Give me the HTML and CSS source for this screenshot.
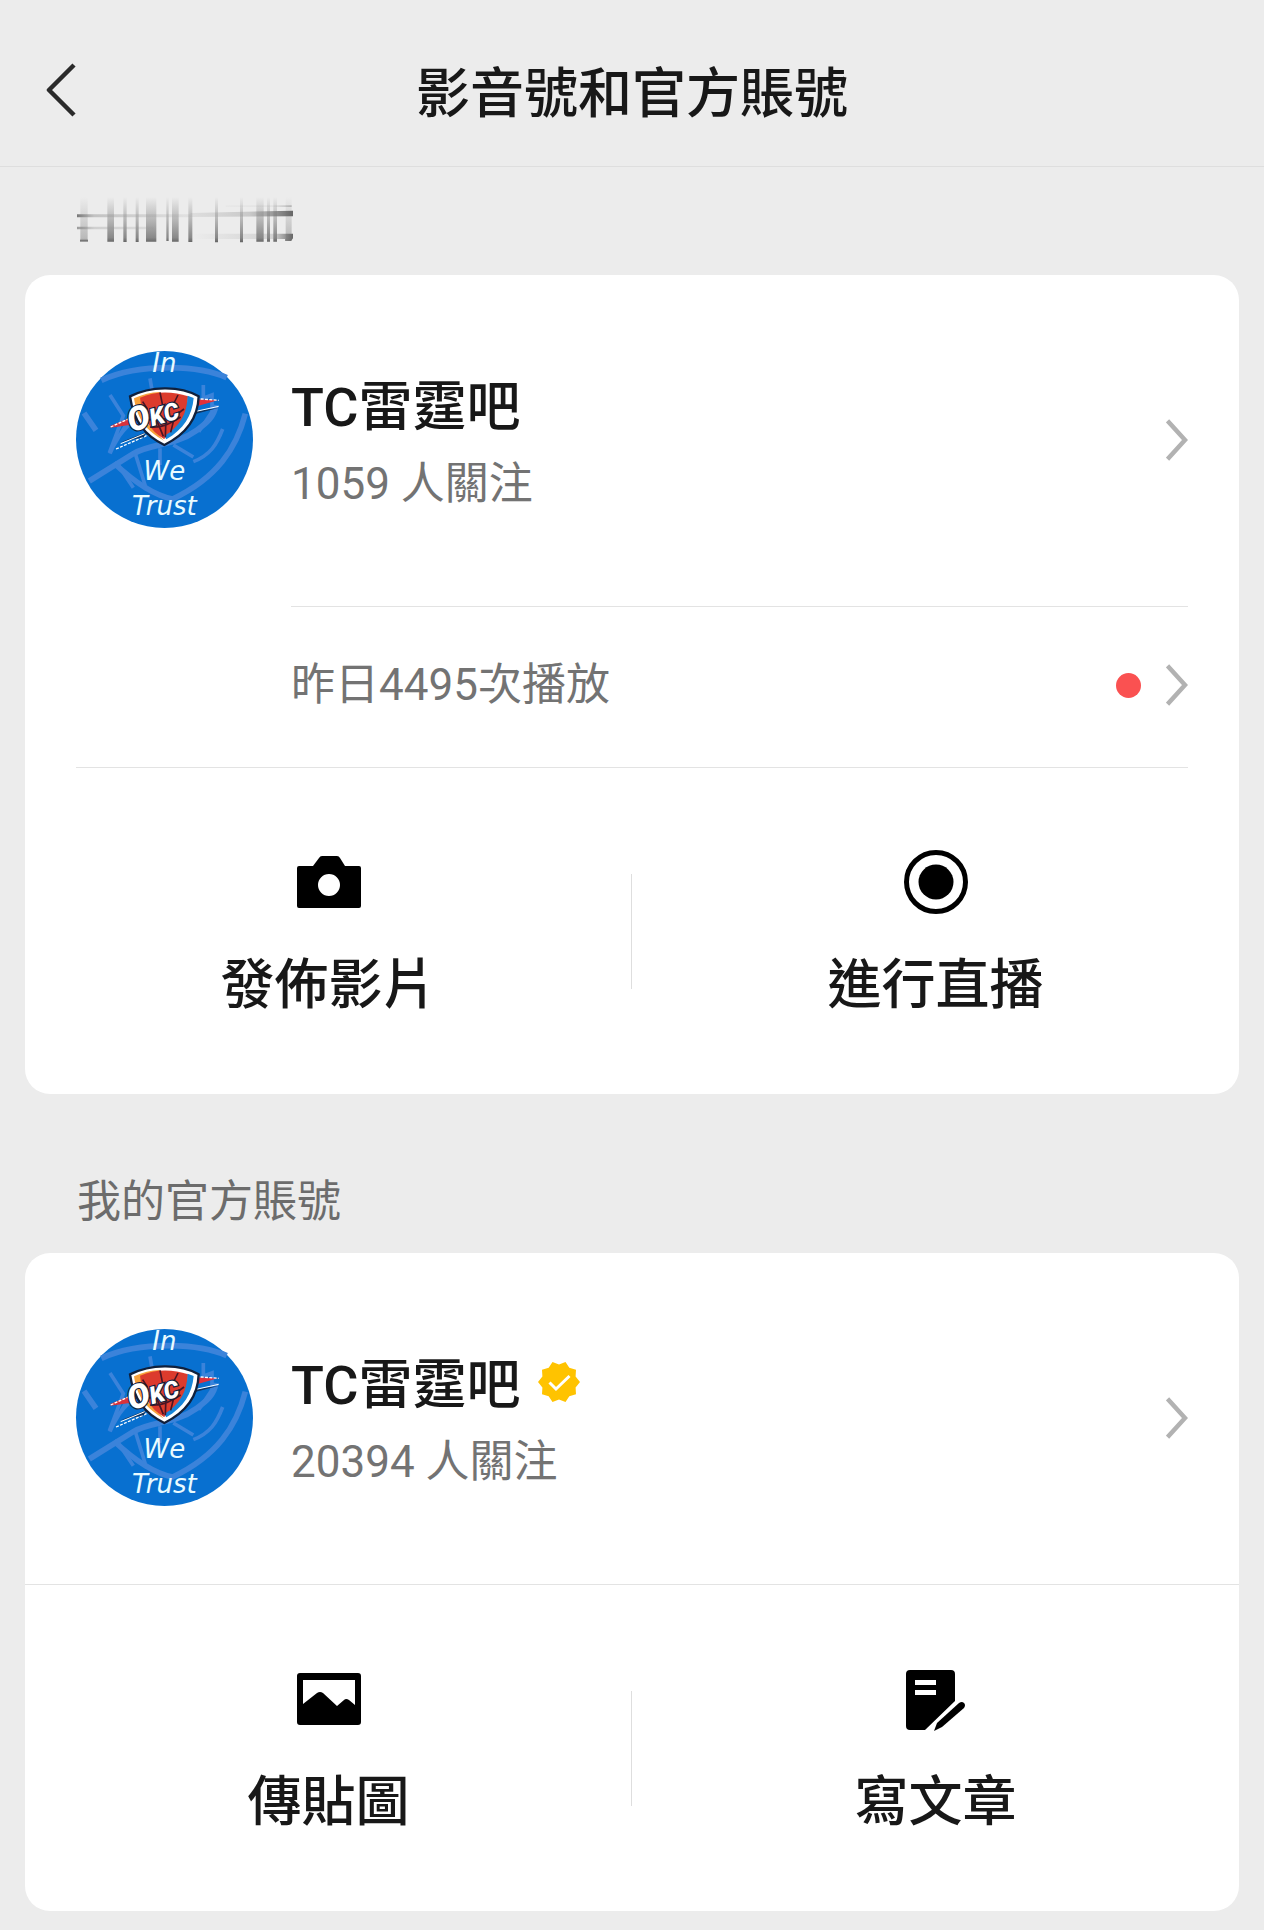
FILE: index.html
```
<!DOCTYPE html>
<html lang="zh-Hant">
<head>
  <meta charset="UTF-8">
  <meta name="viewport" content="width=device-width, initial-scale=1.0">
  <title>影音號和官方賬號</title>
  <link rel="stylesheet" href="styles.css">
</head>
<body>
  <!-- shared icons -->
  <svg class="sprite" aria-hidden="true">
    <symbol id="chevron" viewBox="0 0 22 42">
      <path d="M1.5 1.8 19 21 1.5 40.2" fill="none" stroke="#b2b2b2" stroke-width="4.5"/>
    </symbol>
  </svg>

  <header class="header">
    <button type="button" class="back-btn" aria-label="返回">
      <svg width="30" height="56" viewBox="0 0 30 56"><path d="M28 3 3 28l25 25" fill="none" stroke="#2a2a2a" stroke-width="4.5" stroke-linejoin="round"/></svg>
    </button>
    <h1>影音號和官方賬號</h1>
  </header>

  <main>
    <div class="smudge">
      <svg width="216" height="47" viewBox="54 45 648 141" aria-hidden="true">
        <defs>
          <linearGradient id="fade" gradientUnits="userSpaceOnUse" x1="0" y1="48" x2="0" y2="183">
            <stop offset="0" stop-color="#777" stop-opacity="0"/>
            <stop offset=".5" stop-color="#777" stop-opacity=".45"/>
            <stop offset=".9" stop-color="#777" stop-opacity=".85"/>
            <stop offset="1" stop-color="#666"/>
          </linearGradient>
          <linearGradient id="side" gradientUnits="userSpaceOnUse" x1="54" y1="0" x2="702" y2="0">
            <stop offset="0" stop-color="#777"/>
            <stop offset=".08" stop-color="#999" stop-opacity=".5"/>
            <stop offset=".5" stop-color="#999" stop-opacity=".15"/>
            <stop offset=".8" stop-color="#888" stop-opacity=".35"/>
            <stop offset="1" stop-color="#666"/>
          </linearGradient>
          <linearGradient id="low" gradientUnits="userSpaceOnUse" x1="400" y1="0" x2="702" y2="0">
            <stop offset="0" stop-color="#888" stop-opacity="0"/>
            <stop offset=".8" stop-color="#888" stop-opacity=".25"/>
            <stop offset="1" stop-color="#666"/>
          </linearGradient>
        </defs>
        <path fill="url(#fade)" d="M145 48h20v134h-20zM193 48h10v135h-10zM230 48h9v135h-9zM261 48h31v134h-31zM322 48h7v132h-7zM339 48h20v134h-20zM388 48h12v135h-12zM468 48h9v136h-9zM543 48h9v136h-9zM592 48h22v134h-22zM624 48h9v134h-9zM643 48h11v134h-11z"/>
        <path fill="url(#fade)" opacity=".5" d="M64 48h22v132h-22zM680 48h18v132h-18z"/>
        <path fill="#777" d="M63 176h24v6h-24z"/>
        <path fill="url(#side)" d="M54 100h340v9h-340zM394 96l308-7v17l-308 2z"/>
        <path fill="url(#side)" opacity=".7" d="M54 137h230v8h-230z"/>
        <path fill="url(#low)" d="M400 158h302v14l-6 8h-18v-6h-278z"/>
        <path fill="url(#low)" opacity=".4" d="M500 73h198v5h-198z"/>
      </svg>
    </div>

    <section class="card">
      <a href="#" class="account">
        <svg class="avatar" viewBox="48 48 531 531" aria-hidden="true">
          <g id="avatar">
            <circle cx="313.5" cy="313.5" r="265.5" fill="#0870d0"/>
            <!-- faded crest in the background -->
            <g fill="none" stroke="#3b83da" stroke-width="17">
              <path d="M124 136C184 108 250 98 330 98c72 1 124 9 170 30"/>
              <path d="M556 236C530 340 470 430 338 492c-52-10-106-42-176-108"/>
              <path d="M72 234l36 52M88 438l132-82c60-34 120-20 190-70 30-22 52-40 58-76"/>
              <path d="M150 180l40 62-42 112 52-88 60-30M150 356c20-50 50-90 96-112M176 392l44 66M226 356l34 110M270 130l10 60M430 150v40l26-10v50l-40 60M400 380c50-20 70-50 88-98M340 330l60 36M300 340v50" stroke-width="11"/>
            </g>
            <!-- streaks -->
            <path d="M152 272l84-34-12 30-72 10z" fill="#d8323c"/>
            <path d="M398 192l76 4-64 18z" fill="#e0303a"/>
            <path d="M152 276l84-38M396 190l80 6M168 342l100-44" fill="none" stroke="#fff" stroke-width="4" stroke-dasharray="9 4"/>
            <path d="M182 322l76-30-6 14zM402 238l76-20-66 10z" fill="#10345f"/>
            <path d="M182 326l72-30M404 230l72-16" fill="none" stroke="#fff" stroke-width="3"/>
            <!-- shield -->
            <path d="M210 184c60-30 148-34 206 0-2 62-34 112-103 146-58-28-92-70-103-146z" fill="#fff" stroke="#10203c" stroke-width="7"/>
            <path d="M222 190c26-12 50-18 78-19l-40 92 52 54c-50-28-80-62-90-127z" fill="#f8a23a"/>
            <path d="M240 188c44-20 98-20 144-4 0 54-22 96-72 128-42-24-66-66-72-124z" fill="#dc3b2d"/>
            <path d="M383 182l18 7c-4 52-30 94-82 124l-6-10c48-30 68-68 70-121z" fill="#1684d8"/>
            <path d="M248 200l14 22M300 172l8 40M354 180l-18 36M288 250l22 54M318 250l-2 56M346 236l-14 56M270 276c30 4 60-8 92-30M258 252c36 10 80-2 114-30" fill="none" stroke="#4b1524" stroke-width="5"/>
            <text class="crest-text" x="212" y="292" transform="rotate(-16 212 292)"><tspan font-size="100">O</tspan><tspan font-size="72">KC</tspan></text>
            <g class="avatar-text">
              <text x="313" y="112">In</text>
              <text x="313" y="434">We</text>
              <text x="313" y="541">Trust</text>
            </g>
          </g>
        </svg>
        <div class="info">
          <p class="name">TC雷霆吧</p>
          <p class="sub">1059 人關注</p>
        </div>
        <svg class="chevron" aria-hidden="true"><use href="#chevron"/></svg>
      </a>
      <a href="#" class="stats">
        <span class="sub">昨日4495次播放</span>
        <span class="dot"></span>
        <svg class="chevron" aria-hidden="true"><use href="#chevron"/></svg>
      </a>
      <div class="actions">
        <button type="button" class="action">
          <svg class="icon" viewBox="0 0 78 78">
            <path fill-rule="evenodd" d="M9 23h14l6-8q1-2 3-2h15q2 0 3 2l5 8h14q2 0 2 2v38q0 2-2 2H9q-2 0-2-2V25q0-2 2-2zM39 31a11 11 0 1 0 0 22 11 11 0 0 0 0-22z"/>
          </svg>
          <span>發佈影片</span>
        </button>
        <button type="button" class="action">
          <svg class="icon" viewBox="0 0 78 78">
            <circle cx="39" cy="39" r="29.5" fill="none" stroke="#000" stroke-width="5"/>
            <circle cx="39" cy="39" r="17.5"/>
          </svg>
          <span>進行直播</span>
        </button>
      </div>
    </section>

    <h2 class="section-title">我的官方賬號</h2>

    <section class="card">
      <a href="#" class="account">
        <svg class="avatar" viewBox="48 48 531 531" aria-hidden="true"><use href="#avatar"/></svg>
        <div class="info">
          <p class="name">TC雷霆吧
            <svg class="badge" viewBox="0 0 42 42" aria-hidden="true">
              <path d="M21 3.500 27.500 1l3.800 5.800L38 8.700l-.4 6.900L42 21l-4.400 5.400.4 6.900-6.700 1.900-3.800 5.800-6.500-2.500-6.500 2.500-3.800-5.800L4 33.300l.4-6.900L0 21l4.400-5.400L4 8.700l6.700-1.900L14.500 1z" fill="#ffc300"/>
              <path d="M11.500 21.500l6.500 6.500L31.500 15" fill="none" stroke="#fff" stroke-width="3"/>
            </svg>
          </p>
          <p class="sub">20394 人關注</p>
        </div>
        <svg class="chevron" aria-hidden="true"><use href="#chevron"/></svg>
      </a>
      <div class="actions actions-line">
        <button type="button" class="action">
          <svg class="icon" viewBox="0 0 78 78">
            <path fill-rule="evenodd" d="M10 13h58q3 0 3 3v46q0 3-3 3H10q-3 0-3-3V16q0-3 3-3zM13 20v24l14-11q3-2 6 0l14 13 7-6q2-2 5 0l6 5V20z"/>
          </svg>
          <span>傳貼圖</span>
        </button>
        <button type="button" class="action">
          <svg class="icon" viewBox="0 0 78 78">
            <path fill-rule="evenodd" d="M13 10h41q4 0 4 4v27L28 70H13q-4 0-4-4V14q0-4 4-4zM18 20v5h21v-5zM18 30v5h21v-5z"/>
            <path d="M37 71l3-8 22-20q3-2 5 0t0 5L45 67z"/>
          </svg>
          <span>寫文章</span>
        </button>
      </div>
    </section>
  </main>
</body>
</html>
```
FILE: styles.css
```
* {
  box-sizing: border-box;
  margin: 0;
  padding: 0;
}

body {
  background-color: #ececec;
  color: #181818;
  font-family: "Noto Sans CJK TC", sans-serif;
}

a {
  color: inherit;
  text-decoration: none;
}

button {
  background: none;
  border: none;
  color: inherit;
  font-family: inherit;
  cursor: pointer;
}

svg {
  display: block;
  flex-shrink: 0;
}

.sprite {
  position: absolute;
  width: 0;
  height: 0;
}

.header {
  display: grid;
  grid-template-columns: 80px 1fr 80px;
  align-items: center;
  padding: 50px 0 36px;
  border-bottom: 1px solid #dedede;
}

.back-btn {
  padding-left: 46px;
}

h1 {
  font-size: 54px;
  font-weight: 500;
  line-height: 80px;
  text-align: center;
}

main {
  padding: 0 25px 19px;
}

.smudge {
  padding: 29px 52px 32px;
}

.card {
  background-color: #fff;
  border-radius: 25px;
}

.account {
  display: flex;
  align-items: center;
  padding: 76px 51px 78px;
}

.avatar {
  width: 177px;
  height: 177px;
  margin-right: 38px;
  overflow: visible;
}

.avatar-text {
  font: italic 400 78px "DejaVu Sans", sans-serif;
  fill: #e9fbff;
  text-anchor: middle;
}

.crest-text {
  font-family: Roboto, sans-serif;
  font-style: italic;
  font-weight: 900;
  fill: #fff;
  stroke: #10203c;
  stroke-width: 7px;
  paint-order: stroke;
}

.info {
  flex: 1;
  padding-top: 8px;
}

.name {
  display: flex;
  align-items: center;
  gap: 18px;
  font-family: Roboto, "Noto Sans CJK TC", sans-serif;
  font-size: 54px;
  font-weight: 500;
  line-height: 80px;
}

.badge {
  width: 42px;
  height: 42px;
  margin-bottom: 8px;
}

.sub {
  flex: 1;
  color: #737373;
  font-family: Roboto, "Noto Sans CJK TC", sans-serif;
  font-size: 44px;
  line-height: 72px;
}

.chevron {
  width: 22px;
  height: 42px;
}

.stats {
  display: flex;
  align-items: center;
  gap: 25px;
  height: 161px;
  margin: 0 51px 0 266px;
  padding-bottom: 4px;
  border-top: 1px solid #e3e3e3;
}

.dot {
  width: 25px;
  height: 25px;
  border-radius: 50%;
  background-color: #fa5151;
}

.actions {
  position: relative;
  display: flex;
}

/* line above the buttons, inset to the card padding */
.actions::before {
  content: "";
  position: absolute;
  top: 0;
  left: 51px;
  right: 51px;
  border-top: 1px solid #e3e3e3;
}

.actions-line::before {
  left: 0;
  right: 0;
}

.actions::after {
  content: "";
  position: absolute;
  top: 107px;
  bottom: 105px;
  right: 50%;
  border-left: 1px solid #dedede;
}

.action {
  flex: 1;
  display: flex;
  flex-direction: column;
  align-items: center;
  gap: 20px;
  padding: 76px 0 73px;
  font-size: 54px;
  font-weight: 500;
  line-height: 80px;
}

.icon {
  width: 78px;
  height: 78px;
}

.section-title {
  padding: 68px 52px 19px;
  color: #6c6c6c;
  font-size: 44px;
  font-weight: 400;
  line-height: 72px;
}

@media (max-width: 700px) {
  .header {
    padding: 16px 0;
  }

  h1,
  .name,
  .action {
    font-size: 28px;
    line-height: 40px;
  }

  .sub,
  .section-title {
    font-size: 22px;
    line-height: 36px;
  }

  .account {
    padding: 32px 24px;
  }

  .avatar {
    width: 88px;
    height: 88px;
    margin-right: 20px;
  }

  .stats {
    height: 80px;
    margin: 0 24px 0 132px;
  }
}
```
